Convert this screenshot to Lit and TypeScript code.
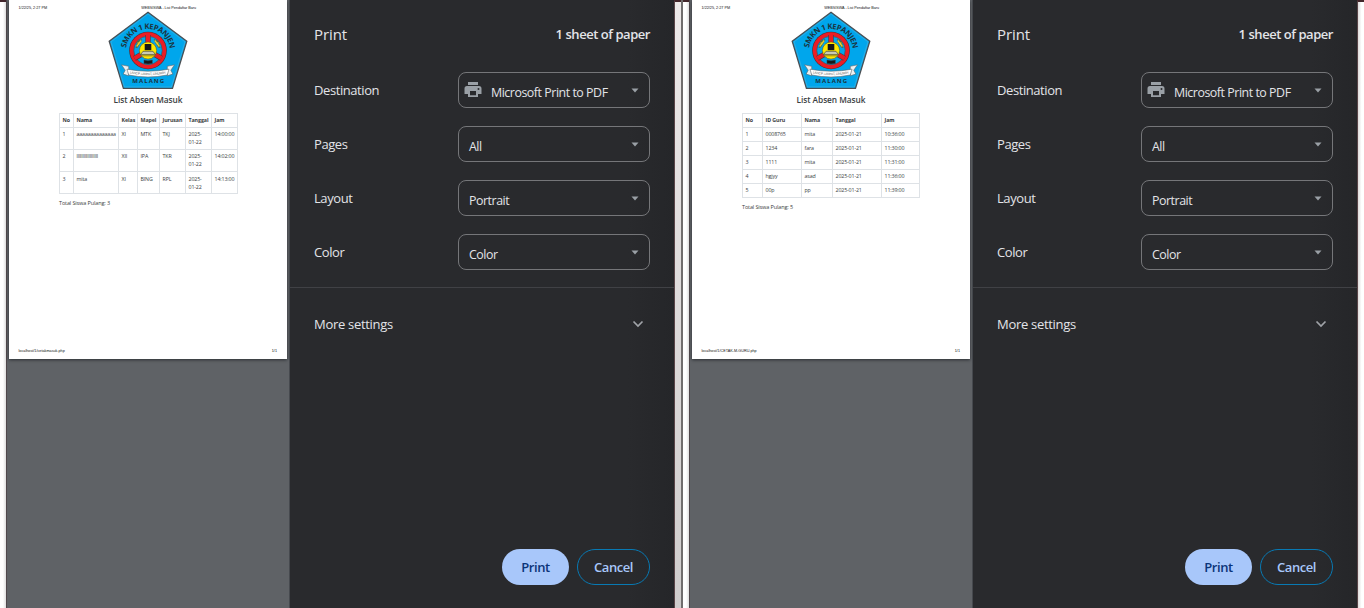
import { LitElement, html, css, svg } from "lit";
import { customElement, property } from "lit/decorators.js";

interface Sheet {
  kind: string;
  head: string[];
  rows: string[][];
  total: string;
  url: string;
}

const STUDENTS: Sheet = {
  kind: "students",
  head: ["No", "Nama", "Kelas", "Mapel", "Jurusan", "Tanggal", "Jam"],
  rows: [
    ["1", "aaaaaaaaaaaaaa", "XI", "MTK", "TKJ", "2025-01-22", "14:00:00"],
    ["2", "llllllllllllllllll", "XII", "IPA", "TKR", "2025-01-22", "14:02:00"],
    ["3", "mita", "XI", "BING", "RPL", "2025-01-22", "14:13:00"],
  ],
  total: "Total Siswa Pulang: 3",
  url: "localhost/1/cetakmasuk.php",
};

const TEACHERS: Sheet = {
  kind: "teachers",
  head: ["No", "ID Guru", "Nama", "Tanggal", "Jam"],
  rows: [
    ["1", "0008765", "mita", "2025-01-21", "10:36:00"],
    ["2", "1234", "fara", "2025-01-21", "11:30:00"],
    ["3", "1111", "mita", "2025-01-21", "11:31:00"],
    ["4", "hgjyy", "asad", "2025-01-21", "11:36:00"],
    ["5", "00p", "pp", "2025-01-21", "11:39:00"],
  ],
  total: "Total Siswa Pulang: 5",
  url: "localhost/1/CETAK-M-GURU.php",
};

@customElement("school-logo")
export class SchoolLogo extends LitElement {
  static styles = css`
    :host { display: block; width: 78px; height: 77px; }
    svg { display: block; overflow: visible; }
    text { font-family: "Open Sans", sans-serif; font-weight: 700; fill: #1c3440; }
    .name { font-size: 7.6px; }
    .city { font-size: 6px; }
    .motto { font-size: 3.3px; font-weight: 400; fill: #555; }
  `;
  render() {
    return html`<svg width="78" height="77" viewBox="0 0 78 77">
      <path d="M39 .2 77.8 29.2 63.5 76.4H14.4L.2 29.2Z" fill="#00a6ec" stroke="#4a4f54" stroke-width="1.3"/>
      <path d="M39 2 76 29.800 62.400 75H15.400L2 29.800Z" fill="none" stroke="#5ab4da" stroke-width=".5"/>
      <path id="arc" d="M17.200 36A22 22 0 0 1 60.800 36" fill="none"/>
      <text class="name"><textPath href="#arc" startOffset="0" textLength="63.500">SMKN 1 KEPANJEN</textPath></text>
      <circle cx="39" cy="38.5" r="18.8" fill="#4a3038"/>
      <circle cx="39" cy="38.5" r="18.2" fill="#ec1c24"/>
      <circle cx="39" cy="38.5" r="14.2" fill="#00a6ec" stroke="#40505a" stroke-width=".7"/>
      <path d="M39 38.5V23M39 38.5 25.5 46.3M39 38.5 52.5 46.3" stroke="#40404a" stroke-width="5.4"/>
      <path d="M39 38.5V23M39 38.5 25.5 46.3M39 38.5 52.5 46.3" stroke="#ec1c24" stroke-width="4.2"/>
      <circle cx="39" cy="38.5" r="8.6" fill="#ffe800" stroke="#665c20" stroke-width=".6"/>
      ${[0, 1].map((i) => svg`<g transform=${i ? "translate(78 0) scale(-1 1)" : ""}>
        <path d="M26.500 36 28.500 29l4.800-2-1.600 4-3 4.500Z" fill="#5a6438"/>
        <path d="M27.600 34.500 32.200 28.500M28.800 30.500l1.200 2.200" stroke="#e5d32c" stroke-width="1.300" fill="none"/>
      </g>`)}
      <rect x="35.7" y="32" width="6.6" height="6.2" fill="#18181a"/>
      <path d="M34 39.3h10l2.4 3.3H31.6Z" fill="#c9cbb4" stroke="#48483c" stroke-width=".7"/>
      <path d="M31.5 43.8h15" stroke="#7e742c" stroke-width=".8"/>
      <path d="M35 48l4 .7 4.3-.7v3.4l-4.3.5-4-.5Z" fill="#16181a" stroke="#33444c" stroke-width=".5"/>
      <path d="M12.500 52.800l7.200 1.500v9.500l-5.500-1.700 2-3.900Z" fill="#eef1f2" stroke="#59656c" stroke-width=".6"/>
      <path d="M65.500 52.800l-7.200 1.500v9.500l5.500-1.700-2-3.900Z" fill="#eef1f2" stroke="#59656c" stroke-width=".6"/>
      <path d="M18 57.2Q39 61.2 60 57.2L58.3 63Q39 67 19.7 63Z" fill="#fff" stroke="#59656c" stroke-width=".6"/>
      <path id="ribbon" d="M20.800 61.400Q39 64.900 57.200 61.400" fill="none"/>
      <text class="motto"><textPath href="#ribbon" textLength="36">LANCIP, LIMPAT, LINUWIH</textPath></text>
      <text class="city" x="23.2" y="70.8" textLength="32">MALANG</text>
    </svg>`;
  }
}

@customElement("print-preview")
export class PrintPreview extends LitElement {
  @property({ attribute: false }) sheet!: Sheet;
  static styles = css`
    :host { display: block; box-sizing: border-box; width: 284px; height: 608px; padding: 0 3px 0 2px; background: #5f6266; border-left: 1px solid #50484c; border-right: 1px solid #46494e; font-family: "Open Sans", sans-serif; color: #3a3e42; }
    .page { display: flex; flex-direction: column; box-sizing: border-box; width: 278px; height: 359px; padding: 5px 10px 4px 9px; background: #fff; box-shadow: 0 1px 3px #2c2f33; }
    .line { display: grid; grid-template-columns: 1fr auto 1fr; padding-left: .5px; font: 3.75px/7px "Liberation Sans", sans-serif; white-space: nowrap; color: #111; }
    .line .mid { margin-left: 42px; letter-spacing: -.03px; }
    .line .end { text-align: right; }
    school-logo { margin: 0 0 0 91px; }
    h1 { margin: 4px 0 0 1px; font-size: 8.3px; line-height: 14px; font-weight: 600; text-align: center; letter-spacing: -.05px; }
    table { margin: 6px 0 0 41px; border-collapse: collapse; table-layout: fixed; font-size: 5.3px; line-height: 8px; letter-spacing: -.14px; }
    .students { width: 179px; }
    .teachers { width: 178px; }
    th, td { box-sizing: border-box; height: 14px; padding: 2px 0 3px 2.5px; border: 1px solid #dee2e6; text-align: left; vertical-align: top; font-weight: 400; }
    th { font-weight: 700; white-space: nowrap; letter-spacing: -.08px; }
    .students td { height: 22px; white-space: nowrap; }
    .students td:nth-child(6) { white-space: normal; padding-right: 5px; }
    .students tr:nth-child(3) td { padding-top: 3px; padding-bottom: 2px; }
    .students th:nth-child(1) { width: 14px; }
    .students th:nth-child(2) { width: 45px; }
    .students th:nth-child(3) { width: 19px; }
    .students th:nth-child(4) { width: 22px; }
    .students th:nth-child(5), .students th:nth-child(6), .students th:nth-child(7) { width: 26px; }
    .teachers th:nth-child(1) { width: 20px; }
    .teachers th:nth-child(2) { width: 39px; }
    .teachers th:nth-child(3) { width: 31px; }
    .teachers th:nth-child(4) { width: 49px; }
    .teachers th:nth-child(5) { width: 38px; }
    .total { margin: 5px 0 0 41px; font-size: 5.5px; line-height: 8px; letter-spacing: -.12px; }
    .foot { margin-top: auto; }
  `;
  render() {
    const s = this.sheet;
    return html`<div class="page">
      <div class="line"><span>1/22/25, 2:27 PM</span><span class="mid">WEBSISWA - List Pendaftar Baru</span><span></span></div>
      <school-logo></school-logo>
      <h1>List Absen Masuk</h1>
      <table class=${s.kind}>
        <thead><tr>${s.head.map((h) => html`<th>${h}</th>`)}</tr></thead>
        <tbody>${s.rows.map((r) => html`<tr>${r.map((c) => html`<td>${c}</td>`)}</tr>`)}</tbody>
      </table>
      <div class="total">${s.total}</div>
      <div class="line foot"><span>${s.url}</span><span></span><span class="end">1/1</span></div>
    </div>`;
  }
}

@customElement("print-settings")
export class PrintSettings extends LitElement {
  static styles = css`
    :host { display: flex; flex-direction: column; box-sizing: border-box; width: 384px; height: 608px; background: linear-gradient(90deg, #292a2d 88%, #252629); color: #e3e4e8; font: 13px/20px "Open Sans", sans-serif; letter-spacing: -.3px; }
    .head { display: flex; justify-content: space-between; align-items: center; height: 68px; padding: 0 24px; box-sizing: border-box; }
    .title { font-size: 15px; letter-spacing: -.1px; }
    .count { font-weight: 600; letter-spacing: -.46px; }
    .rows { display: grid; gap: 18px; padding: 4px 24px 17px 24px; border-bottom: 1px solid #404145; }
    .row { display: flex; justify-content: space-between; align-items: center; height: 36px; }
    .row > span { letter-spacing: -.42px; }
    .select { display: flex; align-items: center; box-sizing: border-box; width: 192px; height: 36px; padding: 0 10px; border: 1px solid #757679; border-radius: 8px; }
    .printer { width: 18px; height: 18px; margin: 0 9px 0 -5px; }
    .value { flex: 1; padding-top: 6px; white-space: nowrap; font-size: 12.4px; letter-spacing: -.46px; }
    .more { display: flex; justify-content: space-between; align-items: center; padding: 26px 30px 0 24px; letter-spacing: -.3px; }
    .buttons { display: flex; justify-content: flex-end; gap: 8px; margin-top: auto; padding: 0 24px 23px 0; }
    button { box-sizing: border-box; height: 36px; padding: 0; border-radius: 18px; font: 600 13px/20px "Open Sans", sans-serif; letter-spacing: -.42px; }
    .ok { width: 67px; border: 0; background: #a8c7fa; color: #0b3478; }
    .cancel { width: 73px; border: 1px solid #0879b3; background: transparent; color: #a8c7fa; }
    svg { display: block; }
  `;
  private row(label: string, value: string, icon = false) {
    return html`<div class="row"><span>${label}</span><div class="select">
      ${icon ? html`<svg class="printer" viewBox="0 0 18 18"><path fill="#9aa0a6" fill-rule="evenodd" d="M4 1h10v3H4ZM3 5h12a2.5 2.5 0 0 1 2.5 2.5V13H14v3H4v-3H.5V7.500A2.500 2.500 0 0 1 3 5ZM6 10v4.200h6V10ZM14.500 7a1 1 0 1 0 0 2 1 1 0 0 0 0-2Z"/></svg>` : ""}
      <span class="value">${value}</span>
      <svg width="8" height="5" viewBox="0 0 8 5"><path d="M.5.500h7L4 4.500Z" fill="#9aa0a6"/></svg>
    </div></div>`;
  }
  render() {
    return html`
      <div class="head"><span class="title">Print</span><span class="count">1 sheet of paper</span></div>
      <div class="rows">
        ${this.row("Destination", "Microsoft Print to PDF", true)}
        ${this.row("Pages", "All")}
        ${this.row("Layout", "Portrait")}
        ${this.row("Color", "Color")}
      </div>
      <div class="more"><span>More settings</span>
        <svg width="12" height="8" viewBox="0 0 12 8"><path d="m1.500 1.500 4.500 4.500 4.500-4.500" fill="none" stroke="#a0a3a8" stroke-width="1.700"/></svg>
      </div>
      <div class="buttons"><button class="ok">Print</button><button class="cancel">Cancel</button></div>
    `;
  }
}

@customElement("app-root")
export class AppRoot extends LitElement {
  static styles = css`
    :host { display: flex; width: 1364px; height: 608px; overflow: hidden; background: #fff; }
    .edge { box-sizing: border-box; width: 6px; height: 608px; border-top: 2px solid #42262b; background: linear-gradient(90deg, #fff 50%, #dedede); }
    .gutter { box-sizing: border-box; width: 7px; height: 608px; border-top: 2px solid #42262b; border-left: 1px solid #5a4548; background: linear-gradient(#ece8e8, #cfcccc); }
    .rule { width: 2px; height: 608px; background: #706d6d; }
    .last { background: linear-gradient(90deg, #dedcdc, #fff 60%); }
  `;
  render() {
    return html`
      <div class="edge"></div>
      <print-preview .sheet=${STUDENTS}></print-preview>
      <print-settings></print-settings>
      <div class="gutter"></div><div class="rule"></div>
      <div class="edge"></div>
      <print-preview .sheet=${TEACHERS}></print-preview>
      <print-settings></print-settings>
      <div class="gutter last"></div>
    `;
  }
}
